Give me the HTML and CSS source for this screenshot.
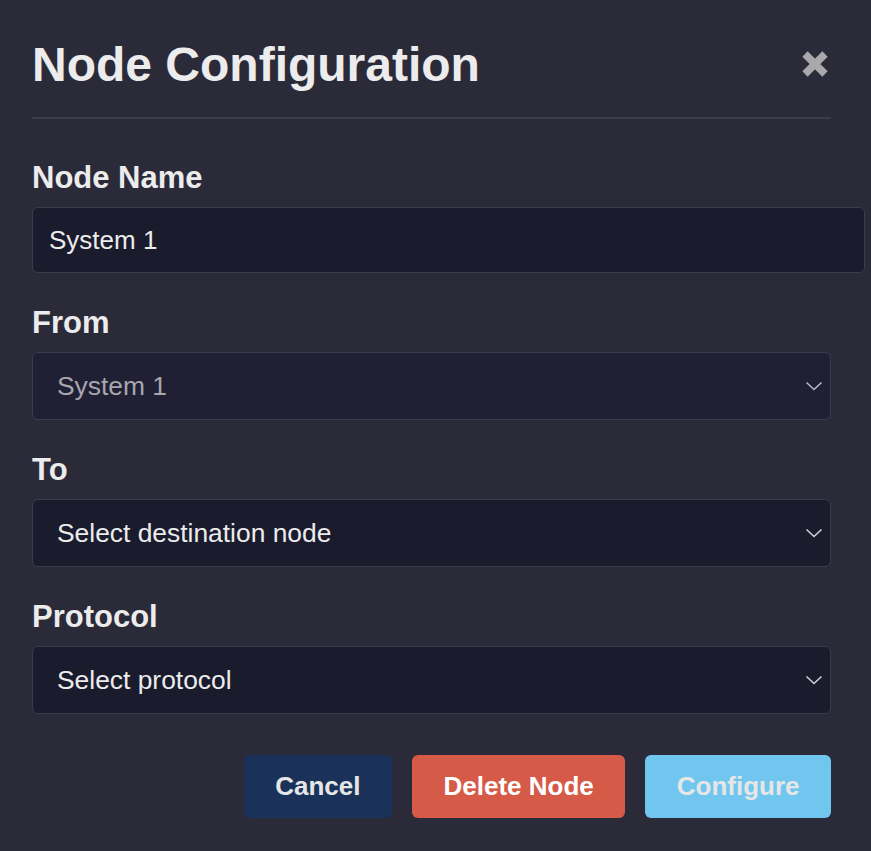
FILE: index.html
```html
<!DOCTYPE html>
<html lang="en">
<head>
<meta charset="utf-8">
<title>Node Configuration</title>
<link rel="stylesheet" href="styles.css">
</head>
<body>
<div class="modal">
  <header class="modal-header">
    <h1 class="modal-title">Node Configuration</h1>
    <button class="close-btn" aria-label="Close">
      <svg width="28" height="28" viewBox="0 0 28 28"><path d="M4 4 L24 24 M24 4 L4 24" stroke="#a9a9ab" stroke-width="7.5" stroke-linecap="butt" fill="none"/></svg>
    </button>
  </header>
  <form class="form">
    <div class="field">
      <label class="field-label">Node Name</label>
      <input class="text-input" type="text" value="System 1">
    </div>
    <div class="field">
      <label class="field-label">From</label>
      <div class="select-wrap">
        <select class="select select-disabled" disabled><option>System 1</option></select>
        <svg class="chevron" width="18" height="10" viewBox="0 0 18 10"><path d="M1.5 1.5 L9 8.5 L16.5 1.5" stroke="#b8b8c0" stroke-width="1.6" fill="none"/></svg>
      </div>
    </div>
    <div class="field">
      <label class="field-label">To</label>
      <div class="select-wrap">
        <select class="select"><option>Select destination node</option></select>
        <svg class="chevron" width="18" height="10" viewBox="0 0 18 10"><path d="M1.5 1.5 L9 8.5 L16.5 1.5" stroke="#d0d0d6" stroke-width="1.6" fill="none"/></svg>
      </div>
    </div>
    <div class="field">
      <label class="field-label">Protocol</label>
      <div class="select-wrap">
        <select class="select"><option>Select protocol</option></select>
        <svg class="chevron" width="18" height="10" viewBox="0 0 18 10"><path d="M1.5 1.5 L9 8.5 L16.5 1.5" stroke="#d0d0d6" stroke-width="1.6" fill="none"/></svg>
      </div>
    </div>
    <div class="actions">
      <button type="button" class="btn btn-cancel">Cancel</button>
      <button type="button" class="btn btn-delete">Delete Node</button>
      <button type="button" class="btn btn-configure">Configure</button>
    </div>
  </form>
</div>
</body>
</html>
```
FILE: styles.css
```css
html, body {
  margin: 0;
  padding: 0;
  background: #2b2a39;
  font-family: "Liberation Sans", Arial, Helvetica, sans-serif;
  color: #ececec;
}

.modal {
  padding: 36px 40px 0 32px;
}

.modal-header {
  display: flex;
  align-items: center;
  justify-content: space-between;
  padding-bottom: 23px;
  border-bottom: 2px solid #3d3c4d;
}

.modal-title {
  margin: 0;
  font-size: 48px;
  line-height: 58px;
  font-weight: bold;
  color: #ececec;
}

.close-btn {
  background: none;
  border: none;
  padding: 0;
  margin-right: 2px;
  margin-top: -2px;
  width: 28px;
  height: 28px;
  display: flex;
}

.form {
  display: flex;
  flex-direction: column;
  gap: 31px;
  margin-top: 40px;
}

.field {
  display: flex;
  flex-direction: column;
  gap: 11px;
}

.field-label {
  font-size: 31px;
  line-height: 37px;
  font-weight: bold;
  color: #ececec;
}

.text-input {
  box-sizing: content-box;
  width: 100%;
  height: 64px;
  padding: 0 16px;
  margin: 0;
  border: 1px solid #3c3b4d;
  border-radius: 6px;
  background: #1b1b2e;
  color: #ececec;
  font-family: "Liberation Sans", Arial, Helvetica, sans-serif;
  font-size: 26px;
  outline: none;
}

.select-wrap {
  position: relative;
}

.select {
  appearance: none;
  -webkit-appearance: none;
  box-sizing: border-box;
  width: 100%;
  height: 68px;
  margin: 0;
  padding: 0 40px 0 24px;
  border: 1px solid #3c3b4d;
  border-radius: 6px;
  background: #1b1b2e;
  color: #ececec;
  font-family: "Liberation Sans", Arial, Helvetica, sans-serif;
  font-size: 26.4px;
  outline: none;
}

.select-disabled {
  background: #201f33;
  color: #a7a7ae;
  opacity: 1;
}

.chevron {
  position: absolute;
  right: 8px;
  top: 29px;
  pointer-events: none;
}

.actions {
  display: flex;
  justify-content: flex-end;
  gap: 20px;
  margin-top: 10px;
}

.btn {
  height: 63px;
  padding: 0 31.5px;
  border: none;
  border-radius: 6px;
  font-family: "Liberation Sans", Arial, Helvetica, sans-serif;
  font-size: 26px;
  font-weight: bold;
}

.btn-cancel {
  background: #1a325a;
  color: #e6e6e6;
}

.btn-delete {
  background: #d65a48;
  color: #ffffff;
}

.btn-configure {
  background: #70c6ee;
  color: #e6e6e6;
}
```
